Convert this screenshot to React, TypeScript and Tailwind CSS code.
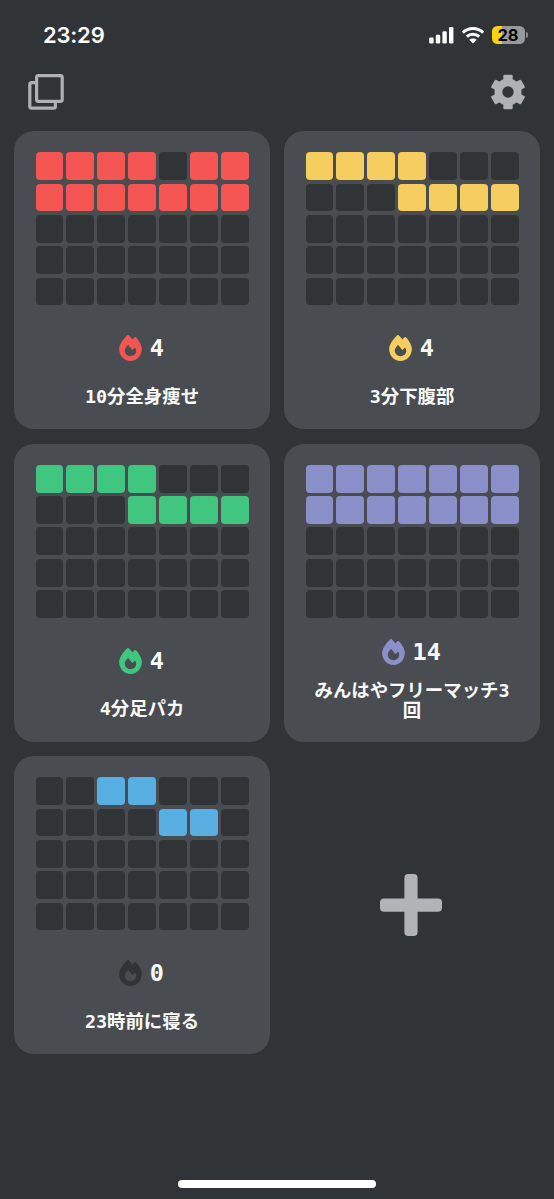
import { FaFire } from "react-icons/fa6";

type Habit = {
  name: string;
  streak: number;
  cells: string[];
  on: string;
  flame: string;
  twoLines?: boolean;
};

const habits: Habit[] = [
  { name: "10分全身痩せ", streak: 4, cells: ["1111011", "1111111"], on: "bg-[#f55653]", flame: "text-[#f55653]" },
  { name: "3分下腹部", streak: 4, cells: ["1111000", "0001111"], on: "bg-[#f6ce60]", flame: "text-[#f6ce60]" },
  { name: "4分足パカ", streak: 4, cells: ["1111000", "0001111"], on: "bg-[#41c67f]", flame: "text-[#41c67f]" },
  { name: "みんはやフリーマッチ3回", streak: 14, cells: ["1111111", "1111111"], on: "bg-[#8b90cb]", flame: "text-[#8b90cb]", twoLines: true },
  { name: "23時前に寝る", streak: 0, cells: ["0011000", "0000110"], on: "bg-[#5aafe2]", flame: "text-[#303437]" },
];

function StatusBar() {
  return (
    <div className="flex h-[70px] items-center justify-between pl-[43px] pr-[26px] text-white">
      <span className="font-['Inter','Liberation_Sans',sans-serif] text-[22px] font-semibold leading-none tracking-[-0.2px]">23:29</span>
      <div className="flex items-center">
        <svg width="26" height="18" viewBox="0 0 26 18" fill="currentColor">
          <rect x="0.2" y="11.5" width="4.4" height="6" rx="1.2" />
          <rect x="6.8" y="8.8" width="4.4" height="8.7" rx="1.2" />
          <rect x="13.4" y="5.2" width="4.4" height="12.3" rx="1.2" />
          <rect x="20" y="1" width="4.4" height="16.5" rx="1.2" />
        </svg>
        <svg className="ml-[6px]" width="24" height="18" viewBox="0 0 24 18" fill="none" stroke="currentColor" strokeWidth="3">
          <path d="M1.8 6.6C7.5 1 16.5 1 22.2 6.6" />
          <path d="M5.8 10.7C9.3 7.4 14.7 7.4 18.2 10.7" />
          <path d="M12 17.5L8.3 13.8C10.4 12 13.6 12 15.7 13.8Z" fill="currentColor" stroke="none" />
        </svg>
        <div className="ml-[7px] flex h-[18px] w-[33px] items-center justify-center rounded-[5.5px] bg-linear-to-r from-[#fbd50b] from-[29%] to-[#98989b] to-[29%]">
          <span className="pr-px font-['Inter','Liberation_Sans',sans-serif] text-[16.5px] font-bold leading-none text-black">28</span>
        </div>
        <div className="ml-px h-[6px] w-[2px] rounded-r-full bg-[#85878a]" />
      </div>
    </div>
  );
}

function GearIcon() {
  return (
    <svg width="36" height="36" viewBox="-18 -18 36 36" fill="currentColor">
      {[0, 60, 120].map((angle) => (
        <rect key={angle} x="-4.7" y="-17.3" width="9.4" height="34.6" rx="1.4" transform={`rotate(${angle})`} />
      ))}
      <circle r="9.6" fill="none" stroke="currentColor" strokeWidth="7.8" />
      <circle r="5.7" className="fill-[#303437]" />
    </svg>
  );
}

function HabitCard({ habit }: { habit: Habit }) {
  return (
    <article className="h-[298px] rounded-[20px] bg-[#494c50] px-[21.5px] pt-[21.2px] font-['DejaVu_Sans_Mono','Noto_Sans_CJK_JP',monospace] font-bold text-[#fafafa]">
      <div className="grid grid-cols-7 gap-x-[3px] gap-y-[3.5px]">
        {Array.from({ length: 35 }, (_, i) => (
          <div
            key={i}
            className={`h-[27.8px] rounded-[4px] ${habit.cells[Math.floor(i / 7)]?.[i % 7] === "1" ? habit.on : "bg-[#303437]"}`}
          />
        ))}
      </div>
      <div className={`flex items-center justify-center gap-[7.5px] pr-px ${habit.twoLines ? "mt-[21px]" : "mt-[30px]"}`}>
        <FaFire className={`h-[26px] w-[23px] ${habit.flame}`} />
        <span className="pt-px text-[23.5px] leading-[25px]">{habit.streak}</span>
      </div>
      <p className={`text-center text-[18.4px] leading-[20px] ${habit.twoLines ? "mt-[16px]" : "mt-[25.6px]"}`}>{habit.name}</p>
    </article>
  );
}

export default function App() {
  return (
    <div className="flex h-[1199px] w-[554px] flex-col overflow-hidden bg-[#303437]">
      <StatusBar />
      <header className="flex h-[61.2px] items-start justify-between pl-[28px] pr-[28px] pt-[4px] text-[#afb1b4]">
        <svg width="36" height="36" viewBox="0 0 36 36" fill="none" stroke="currentColor" strokeWidth="3.2" strokeLinejoin="round">
          <rect x="8.6" y="1.7" width="25.6" height="25.6" rx="1.8" />
          <path d="M8.6 8.7H3.7Q1.8 8.7 1.8 10.6V32.2Q1.8 34.1 3.7 34.1H25.5Q27.4 34.1 27.4 32.2V27.3" />
        </svg>
        <GearIcon />
      </header>
      <main className="grid grid-cols-2 gap-x-[14px] gap-y-[14.5px] px-[14px]">
        {habits.map((habit) => (
          <HabitCard key={habit.name} habit={habit} />
        ))}
        <button aria-label="Add" className="flex items-center justify-center pr-[2px] text-[#b1b3b5]">
          <svg width="62" height="62" viewBox="0 0 62 62" fill="currentColor">
            <rect x="24.4" y="0" width="13.2" height="62" rx="4" />
            <rect x="0" y="24.5" width="62" height="13.2" rx="4" />
          </svg>
        </button>
      </main>
      <div className="mx-auto mb-[11px] mt-auto h-[8px] w-[198px] rounded-full bg-white" />
    </div>
  );
}
